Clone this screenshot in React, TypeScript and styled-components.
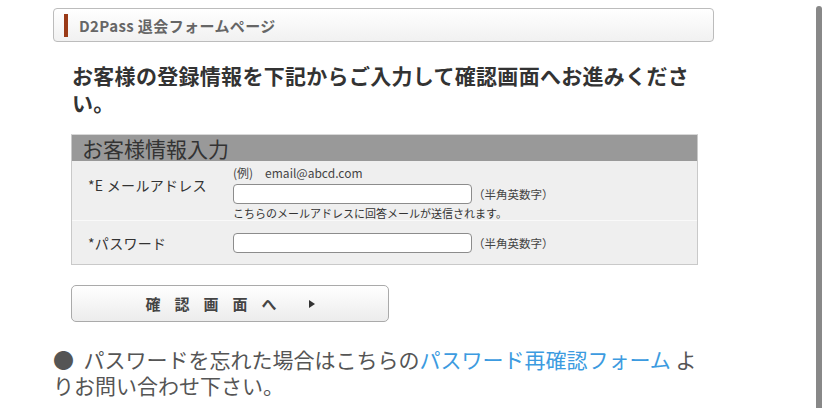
import { FC } from "react";
import styled, { createGlobalStyle } from "styled-components";

const GlobalStyle = createGlobalStyle`
  html, body {
    margin: 0;
    padding: 0;
    background: #ffffff;
  }
  body {
    font-family: "Noto Sans CJK JP", "Noto Sans", "Liberation Sans", sans-serif;
    color: #333;
  }
`;

const Page = styled.div`
  width: 661px;
  padding: 8px 0 0 53px;
`;

const TitleBar = styled.div`
  box-sizing: border-box;
  height: 34px;
  display: flex;
  align-items: center;
  border: 1px solid #bcbcbc;
  border-radius: 4px;
  background: linear-gradient(#ffffff, #f1f1f1);
`;

const TitleAccent = styled.span`
  width: 4px;
  height: 23px;
  margin: 0 11px 0 10px;
  background: #9a3a17;
`;

const TitleText = styled.h1`
  margin: 0;
  font-size: 15px;
  font-weight: bold;
  letter-spacing: 0.4px;
  color: #666;
  line-height: 1;
`;

const Section = styled.section`
  width: 627px;
  padding: 20px 0 0 18px;
`;

const Lead = styled.h2`
  margin: 0 0 18px 1px;
  font-size: 21px;
  letter-spacing: 0.3px;
  line-height: 27px;
  font-weight: bold;
  color: #333;
`;

const FormTable = styled.div`
  border: 1px solid #c9c9c9;
  border-top-color: #d8d8d8;
  background: #efefef;
`;

const FormHead = styled.div`
  height: 26px;
  padding-left: 10px;
  background: #999999;
  font-size: 21px;
  line-height: 26px;
  color: #333;
`;

const FormRow = styled.div<{ $top?: boolean }>`
  display: flex;
  align-items: ${(p) => (p.$top ? "flex-start" : "center")};
  height: ${(p) => (p.$top ? "59px" : "44px")};
  border-top: ${(p) => (p.$top ? "none" : "1px solid #f9f9f9")};
  box-sizing: border-box;
`;

const RowLabel = styled.div<{ $top?: boolean }>`
  width: 145px;
  padding: ${(p) => (p.$top ? "15px" : "0")} 0 0 16px;
  font-size: 14px;
  letter-spacing: 0.3px;
  line-height: 18px;
  color: #333;
`;

const RowBody = styled.div`
  display: flex;
  flex-direction: column;
  padding-top: 5px;
`;

const Hint = styled.div`
  font-size: 12px;
  line-height: 13px;
  color: #444;
`;

const Note = styled.div`
  font-size: 11px;
  line-height: 14px;
  margin-top: 2px;
  color: #333;
`;

const InputLine = styled.div<{ $gap?: number }>`
  display: flex;
  align-items: center;
  margin-top: ${(p) => p.$gap ?? 0}px;
`;

const TextInput = styled.input`
  box-sizing: border-box;
  width: 239px;
  height: 20px;
  border: 1px solid #8c8c8c;
  border-radius: 4px;
  background: #fff;
  padding: 0 4px;
`;

const Kind = styled.span`
  margin-left: 1px;
  font-size: 11.5px;
  color: #444;
`;

const ConfirmButton = styled.button`
  margin-top: 20px;
  width: 318px;
  height: 37px;
  display: flex;
  align-items: center;
  justify-content: center;
  border: 1px solid #aaaaaa;
  border-radius: 5px;
  background: linear-gradient(#ffffff, #ececec);
  font-family: inherit;
  font-size: 15px;
  font-weight: bold;
  color: #444;
  letter-spacing: 14px;
  cursor: pointer;
`;

const Arrow = styled.svg`
  margin-left: 18px;
`;

const Footer = styled.p`
  margin: 24px 0 0;
  font-size: 21px;
  line-height: 26px;
  color: #555;
`;

const Link = styled.a`
  color: #3c9be0;
  text-decoration: none;
`;

const ScrollThumb = styled.div`
  position: fixed;
  top: 6px;
  right: 6px;
  width: 6px;
  height: 410px;
  border-radius: 3px;
  background: #888;
`;

const App: FC = () => {
  return (
    <>
      <GlobalStyle />
      <Page>
        <TitleBar>
          <TitleAccent />
          <TitleText>D2Pass 退会フォームページ</TitleText>
        </TitleBar>

        <Section>
          <Lead>お客様の登録情報を下記からご入力して確認画面へお進みください。</Lead>

          <FormTable>
            <FormHead>お客様情報入力</FormHead>
            <FormRow $top>
              <RowLabel $top>*E メールアドレス</RowLabel>
              <RowBody>
                <Hint>(例)　email@abcd.com</Hint>
                <InputLine $gap={5}>
                  <TextInput type="text" />
                  <Kind>（半角英数字）</Kind>
                </InputLine>
                <Note>こちらのメールアドレスに回答メールが送信されます。</Note>
              </RowBody>
            </FormRow>
            <FormRow>
              <RowLabel>*パスワード</RowLabel>
              <InputLine>
                <TextInput type="password" />
                <Kind>（半角英数字）</Kind>
              </InputLine>
            </FormRow>
          </FormTable>

          <ConfirmButton type="button">
            確認画面へ
            <Arrow width="6" height="8" viewBox="0 0 6 8">
              <path d="M0 0 L6 4 L0 8 Z" fill="#333" />
            </Arrow>
          </ConfirmButton>
        </Section>

        <Footer>
          ●&nbsp; パスワードを忘れた場合はこちらの<Link href="#">パスワード再確認フォーム</Link> よりお問い合わせ下さい。
        </Footer>
      </Page>
      <ScrollThumb />
    </>
  );
};

export default App;
